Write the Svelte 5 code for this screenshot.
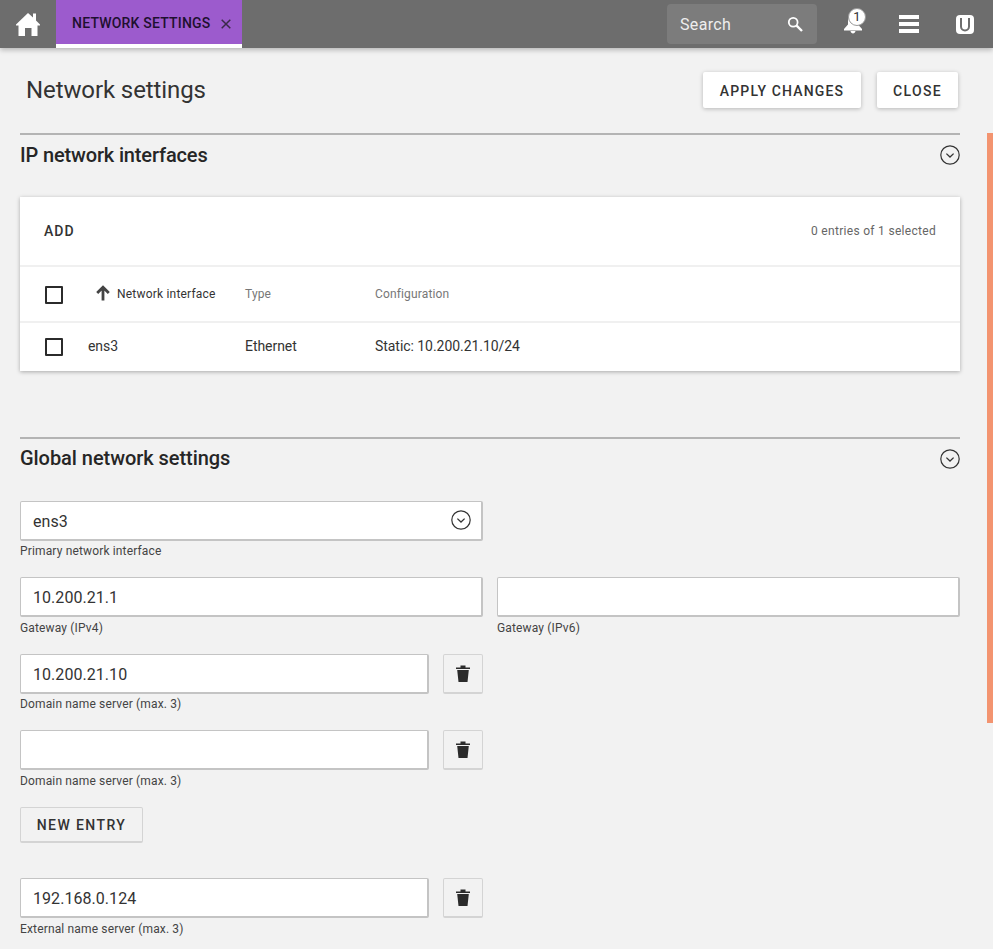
<script lang="ts">
  const servers = [
    { value: "10.200.21.10", label: "Domain name server (max. 3)" },
    { value: "", label: "Domain name server (max. 3)" },
  ];
</script>

{#snippet chevron()}
  <svg class="chevron" viewBox="0 0 20 20" width="20" height="20" aria-hidden="true">
    <circle cx="10" cy="10" r="9.2" fill="none" stroke="#333" stroke-width="1.2" />
    <path d="M6.4 8.6 10 12l3.6-3.4" fill="none" stroke="#333" stroke-width="1.3" />
  </svg>
{/snippet}

{#snippet trash()}
  <button type="button" class="icon-button" aria-label="Delete">
    <svg viewBox="0 0 14 17" width="14" height="17" aria-hidden="true">
      <path d="M4.5.5h5v2h4.500V4H0V2.500h4.500zM1.200 5h11.600l-1.300 12h-9z" fill="#2b2b2b" />
    </svg>
  </button>
{/snippet}

<header class="topbar">
  <a class="home" href="#home" aria-label="Home">
    <svg viewBox="0 0 24 24" width="24" height="24" aria-hidden="true">
      <path d="M12 1 17 5.500V1.500h3V8.500L24 12.500V13.500H21.500V24H15.500V16H9V24H2.500V13.500H0V12.500Z" fill="#fff" />
    </svg>
  </a>
  <div class="tab">
    <span>NETWORK SETTINGS</span>
    <svg viewBox="0 0 10 10" width="10" height="10" aria-hidden="true">
      <path d="M.7.7l8.600 8.600M9.300.7.7 9.300" stroke="#3a2a48" stroke-width="1.500" fill="none" />
    </svg>
  </div>
  <div class="search">
    <span>Search</span>
    <svg viewBox="0 0 16 16" width="16" height="16" aria-hidden="true">
      <circle cx="6.200" cy="6.200" r="4.400" fill="none" stroke="#fff" stroke-width="1.800" />
      <path d="M9.600 9.600 15 15" stroke="#fff" stroke-width="2.400" />
    </svg>
  </div>
  <div class="bell">
    <svg viewBox="0 0 20 20" width="20" height="20" aria-hidden="true">
      <path d="M10 1c3 0 5 3 5 6v3.500l4 4.500v1.500H1V15l4-4.500V7c0-3 2-6 5-6zM7.500 17h5c-.2 1.500-1.300 2.500-2.500 2.500S7.700 18.500 7.500 17z" fill="#fff" />
    </svg>
    <span class="badge">1</span>
  </div>
  <div class="menu" aria-label="Menu"><i></i><i></i><i></i></div>
  <div class="user" aria-label="User">
    <svg viewBox="0 0 18 19" width="18" height="19" aria-hidden="true">
      <rect x="0" y="0" width="18" height="19" rx="4" fill="#fff" />
      <path d="M5 3v8.500a4 4 0 0 0 8 0V3" fill="none" stroke="#6d6d6d" stroke-width="2" />
    </svg>
  </div>
</header>

<main class="page">
  <div class="title-row">
    <h1>Network settings</h1>
    <div class="actions">
      <button type="button" class="raised apply">APPLY CHANGES</button>
      <button type="button" class="raised close">CLOSE</button>
    </div>
  </div>

  <section class="section ip">
    <div class="section-head">
      <h2>IP network interfaces</h2>
      {@render chevron()}
    </div>

    <div class="card">
      <div class="card-top">
        <span class="add">ADD</span>
        <span class="count">0 entries of 1 selected</span>
      </div>
      <div class="table-row head">
        <span class="check"></span>
        <span class="col-name sorted">
          <svg viewBox="0 0 16 16" width="16" height="16" aria-hidden="true">
            <path d="M8 15.500V2.500M2.200 8 8 2.200 13.800 8" fill="none" stroke="#444" stroke-width="2.800" />
          </svg>
          Network interface
        </span>
        <span>Type</span>
        <span>Configuration</span>
      </div>
      <div class="table-row body">
        <span class="check"></span>
        <span class="col-name">ens3</span>
        <span>Ethernet</span>
        <span>Static: 10.200.21.10/24</span>
      </div>
    </div>
  </section>

  <section class="section global">
    <div class="section-head">
      <h2>Global network settings</h2>
      {@render chevron()}
    </div>

    <div class="form">
      <div class="pair">
        <div class="field">
          <div class="input select"><span class="value">ens3</span> {@render chevron()}</div>
          <span class="hint">Primary network interface</span>
        </div>
      </div>

      <div class="pair">
        <div class="field">
          <div class="input"><span class="value">10.200.21.1</span></div>
          <span class="hint">Gateway (IPv4)</span>
        </div>
        <div class="field">
          <div class="input"></div>
          <span class="hint">Gateway (IPv6)</span>
        </div>
      </div>

      {#each servers as server}
        <div class="pair">
          <div class="field">
            <div class="input-line">
              <div class="input"><span class="value">{server.value}</span></div>
              {@render trash()}
            </div>
            <span class="hint">{server.label}</span>
          </div>
        </div>
      {/each}

      <button type="button" class="new-entry">NEW ENTRY</button>

      <div class="pair">
        <div class="field">
          <div class="input-line">
            <div class="input"><span class="value">192.168.0.124</span></div>
            {@render trash()}
          </div>
          <span class="hint">External name server (max. 3)</span>
        </div>
      </div>
    </div>
  </section>
</main>

<div class="scroll-thumb"></div>

<style>
  :global(body) {
    margin: 0;
    height: 949px;
    overflow: hidden;
    background: #f2f2f2;
    color: #262626;
    font-family: Roboto, "Liberation Sans", sans-serif;
  }

  .topbar {
    height: 48px;
    display: flex;
    align-items: center;
    background: #6d6d6d;
    box-shadow: 0 2px 5px rgba(0, 0, 0, 0.25);
    position: relative;
  }

  .home {
    width: 56px;
    height: 48px;
    display: flex;
    align-items: center;
    justify-content: center;
  }

  .tab {
    width: 186px;
    height: 48px;
    box-sizing: border-box;
    border-bottom: 4px solid #fff;
    display: flex;
    align-items: center;
    gap: 10px;
    padding: 2px 0 0 16px;
    background: #9c5bcd;
    color: #1f1030;
    font-size: 14px;
    font-weight: 500;
    letter-spacing: 0.2px;
  }

  .tab svg {
    margin-top: 2px;
  }

  .search {
    margin-left: auto;
    width: 150px;
    height: 40px;
    box-sizing: border-box;
    padding: 0 14px 0 13px;
    border-radius: 4px;
    background: #7c7c7c;
    color: #eee;
    font-size: 16px;
    letter-spacing: 0.35px;
    display: flex;
    align-items: center;
    justify-content: space-between;
  }

  .bell {
    width: 20px;
    height: 20px;
    margin-left: 26px;
    position: relative;
  }

  .bell svg {
    display: block;
  }

  .badge {
    position: absolute;
    left: 5px;
    top: -6px;
    width: 18px;
    height: 18px;
    border-radius: 50%;
    background: #fff;
    border: 1px solid #999;
    box-sizing: border-box;
    color: #333;
    font-size: 13px;
    line-height: 16px;
    text-align: center;
  }

  .menu {
    width: 20px;
    margin-left: 36px;
    display: grid;
    gap: 3px;
  }

  .menu i {
    display: block;
    height: 4px;
    background: #fff;
  }

  .user {
    width: 18px;
    height: 19px;
    margin-left: 37px;
    margin-right: 19px;
  }

  .user svg {
    display: block;
  }

  .page {
    padding: 0 33px 0 20px;
  }

  .title-row {
    height: 85px;
    display: flex;
    align-items: center;
    justify-content: space-between;
    padding: 0 2px 1px 6px;
    box-sizing: border-box;
  }

  h1 {
    margin: 0;
    font-size: 24px;
    font-weight: 400;
    letter-spacing: -0.1px;
    color: #333;
  }

  .actions {
    display: flex;
    gap: 16px;
  }

  button {
    font: inherit;
    cursor: pointer;
  }

  .raised {
    height: 36px;
    padding: 2px 16px 0;
    border: 0;
    border-radius: 2px;
    background: #fff;
    color: #333;
    font-size: 14px;
    font-weight: 500;
    box-shadow: 0 1px 4px rgba(0, 0, 0, 0.25);
  }

  .apply {
    width: 158px;
    letter-spacing: 1.15px;
  }

  .close {
    width: 81px;
    letter-spacing: 1.3px;
  }

  .section {
    border-top: 2px solid #b4b4b4;
  }

  .section-head {
    height: 40px;
    display: flex;
    align-items: center;
    justify-content: space-between;
  }

  h2 {
    margin: 0;
    font-size: 20px;
    font-weight: 500;
    letter-spacing: -0.05px;
  }

  .chevron {
    display: block;
  }

  .ip {
    margin-bottom: 66px;
  }

  .ip h2 {
    letter-spacing: -0.15px;
  }

  .card {
    margin-top: 22px;
    background: #fff;
    box-shadow: 0 1px 4px rgba(0, 0, 0, 0.3);
  }

  .card-top {
    height: 68px;
    padding: 0 24px;
    display: flex;
    align-items: center;
    justify-content: space-between;
  }

  .add {
    font-size: 14px;
    font-weight: 500;
    letter-spacing: 1px;
    color: #333;
  }

  .count {
    font-size: 12px;
    letter-spacing: 0.3px;
    color: #666;
  }

  .table-row {
    display: grid;
    grid-template-columns: 68px 157px 130px 1fr;
    align-items: center;
    box-sizing: border-box;
    border-top: 2px solid #f0f0f0;
  }

  .table-row.head {
    height: 56px;
    font-size: 12px;
    letter-spacing: 0.15px;
    color: #777;
  }

  .table-row.body {
    height: 50px;
    padding-bottom: 2px;
    font-size: 14px;
    letter-spacing: -0.05px;
    color: #333;
  }

  .check {
    width: 14px;
    height: 14px;
    margin: 2px 0 0 25px;
    border: 2px solid #2b2b2b;
    border-radius: 1px;
  }

  .sorted {
    display: flex;
    align-items: center;
    gap: 6px;
    color: #333;
    white-space: nowrap;
    padding-left: 7px;
    letter-spacing: 0.2px;
  }

  .sorted svg {
    margin-top: -3px;
  }

  .global .section-head {
    margin-bottom: 21.6px;
  }

  .global h2 {
    margin-bottom: 2px;
  }

  .form {
    display: grid;
    gap: 16.5px;
  }

  .pair {
    display: grid;
    grid-template-columns: 463px 463px;
    gap: 14px;
  }

  .field {
    display: grid;
    gap: 2.5px;
    align-content: start;
    height: 60px;
  }

  .input {
    height: 40px;
    box-sizing: border-box;
    padding: 0 12px;
    border: 1px solid #c4c4c4;
    border-bottom-width: 2px;
    border-right-width: 2px;
    border-radius: 2px;
    background: #fff;
    font-size: 16px;
    letter-spacing: 0.05px;
    color: #333;
    display: flex;
    align-items: center;
  }

  .value {
    padding-top: 2px;
  }

  .select {
    justify-content: space-between;
    padding-right: 10px;
  }

  .input-line {
    display: grid;
    grid-template-columns: 409px 40px;
    gap: 14px;
  }

  .icon-button {
    height: 40px;
    padding: 0;
    border: 1px solid #d4d4d4;
    border-bottom-width: 2px;
    border-radius: 2px;
    background: #f2f2f2;
    display: flex;
    align-items: center;
    justify-content: center;
  }

  .hint {
    font-size: 12px;
    line-height: 16px;
    letter-spacing: 0.15px;
    color: #444;
  }

  .new-entry {
    width: 123px;
    height: 36px;
    padding: 2px 0 0;
    border: 1px solid #d4d4d4;
    border-bottom-width: 2px;
    border-radius: 2px;
    background: #f2f2f2;
    color: #333;
    font-size: 14px;
    font-weight: 500;
    letter-spacing: 1.4px;
    margin-bottom: 19px;
  }

  .scroll-thumb {
    position: fixed;
    left: 987px;
    top: 133px;
    width: 6px;
    height: 590px;
    background: #f39470;
  }
</style>
